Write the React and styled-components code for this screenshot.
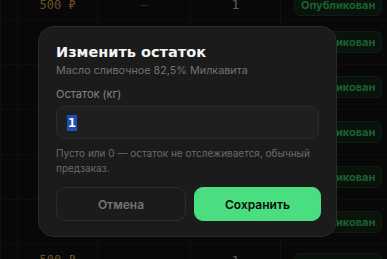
import styled, { createGlobalStyle } from "styled-components"

const GlobalStyle = createGlobalStyle`
html, body {
margin: 0;
padding: 0;
background: #0b0b0b;
overflow: hidden;
}
#root {
width: 387px;
height: 259px;
}
`

const Page = styled.div`
position: relative;
width: 387px;
height: 259px;
overflow: hidden;
background: #0b0b0b;
font-family: Inter, "Noto Sans", sans-serif;
`

const Table = styled.div`
display: flex;
flex-direction: column;
margin-top: -10px;
`

const Row = styled.div`
display: grid;
grid-template-columns: 17px 80px 93px 90px 107px;
height: ${(props) => props.h}px;
border-bottom: 1px solid #131313;
box-sizing: border-box;
`

const Cell = styled.div`
display: flex;
align-items: ${(props) => (props.top ? "flex-start" : "center")};
padding-top: ${(props) => (props.top ? "8px" : "0")};
box-sizing: border-box;
justify-content: ${(props) => (props.left ? "flex-start" : "center")};
border-left: 1px solid #141414;
height: 100%;
`

const Price = styled.span`
font-family: "DejaVu Sans Mono", "Liberation Mono", monospace;
font-size: 12px;
color: #8c6c30;
`

const Dash = styled.span`
font-family: "DejaVu Sans Mono", monospace;
font-size: 11px;
color: #2e5a48;
`

const Qty = styled.span`
font-family: "DejaVu Sans Mono", monospace;
font-size: 13px;
color: #7a7a7a;
`

const Badge = styled.span`
margin-left: 13px;
padding: 3px 6px;
border-radius: 6px;
background: #0e1811;
border: 1px solid #15241a;
color: #22823f;
font-size: 11px;
font-weight: 700;
white-space: nowrap;
`

const Overlay = styled.div`
position: absolute;
inset: 0;
background: rgba(0, 0, 0, 0.25);
display: flex;
justify-content: flex-start;
padding: 26px 0 0 38px;
box-sizing: border-box;
`

const Modal = styled.div`
width: 299px;
height: 211px;
box-sizing: border-box;
padding: 16px 17px 0 17px;
background: #1b1b1b;
border: 1px solid #2a2a2a;
border-radius: 16px;
display: flex;
flex-direction: column;
`

const Title = styled.h2`
margin: 0;
font-family: "DejaVu Sans", sans-serif;
font-size: 14.5px;
font-weight: 700;
color: #f4f4f4;
line-height: 18px;
`

const Subtitle = styled.div`
margin-top: 3px;
font-size: 10.8px;
color: #717171;
line-height: 14px;
`

const Label = styled.div`
margin-top: 9px;
font-size: 11px;
color: #858585;
line-height: 14px;
`

const InputBox = styled.div`
margin-top: 5px;
height: 33px;
box-sizing: border-box;
border: 1px solid #2b2b2b;
border-radius: 8px;
background: #1f1f1f;
display: flex;
align-items: center;
padding-left: 10px;
`

const Selected = styled.span`
font-family: "DejaVu Sans Mono", monospace;
font-size: 13px;
font-weight: 700;
color: #ffffff;
background: #1c4fb0;
line-height: 16px;
padding: 0 1px;
`

const Hint = styled.div`
margin-top: 7px;
font-size: 10px;
color: #6a6a6a;
line-height: 15px;
`

const Buttons = styled.div`
margin-top: 11px;
display: grid;
grid-template-columns: 130px 127px;
gap: 8px;
`

const Button = styled.button`
height: 34px;
border-radius: 9px;
font-family: Inter, "Noto Sans", sans-serif;
font-size: 12px;
font-weight: 600;
border: 1px solid ${(props) => (props.primary ? "#4ade80" : "#2c2c2c")};
background: ${(props) => (props.primary ? "#4ade80" : "#1b1b1b")};
color: ${(props) => (props.primary ? "#0a0a0a" : "#747474")};
`

const rows = [30, 45, 45, 45, 45, 45, 45]

function App() {
    return (
        <>
            <GlobalStyle />
            <Page>
                <Table>
                    {rows.map((h, i) => (
                        <Row key={i} h={h}>
                            <Cell />
                            <Cell top={i === 6}>{(i === 0 || i === 6) && <Price>500 ₽</Price>}</Cell>
                            <Cell>{i === 0 && <Dash>—</Dash>}</Cell>
                            <Cell top={i === 6}>{(i === 0 || i === 6) && <Qty>1</Qty>}</Cell>
                            <Cell left top={i === 6}>
                                <Badge>Опубликован</Badge>
                            </Cell>
                        </Row>
                    ))}
                </Table>
                <Overlay>
                    <Modal>
                        <Title>Изменить остаток</Title>
                        <Subtitle>Масло сливочное 82,5% Милкавита</Subtitle>
                        <Label>Остаток (кг)</Label>
                        <InputBox>
                            <Selected>1</Selected>
                        </InputBox>
                        <Hint>Пусто или 0 — остаток не отслеживается, обычный предзаказ.</Hint>
                        <Buttons>
                            <Button>Отмена</Button>
                            <Button primary>Сохранить</Button>
                        </Buttons>
                    </Modal>
                </Overlay>
            </Page>
        </>
    )
}

export default App
